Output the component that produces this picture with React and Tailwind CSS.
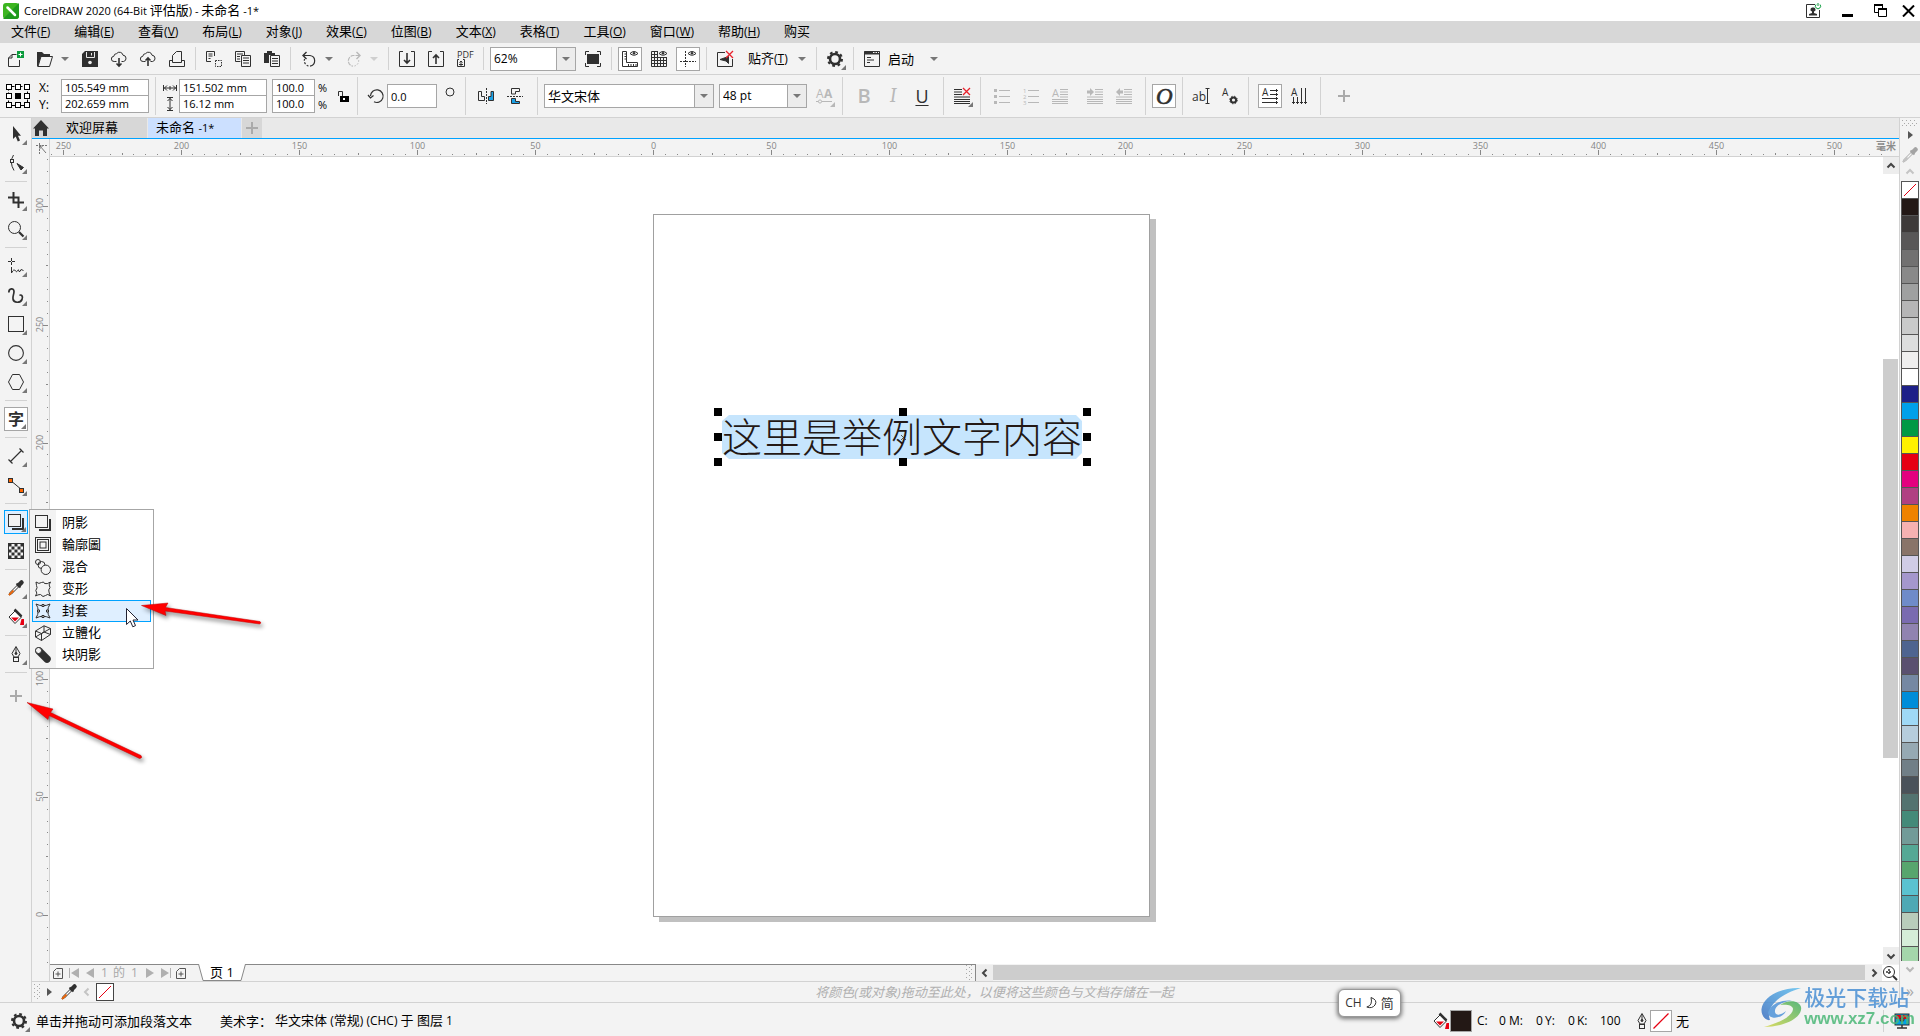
import React, { useState } from 'react';

const icons = {
  newDoc: (
    <>
      <path d="M8.5 3.5H4L.5 7V15.5H11.5V9" />
      <path d="M.5 7H4V3.5" />
      <rect x="9" y="0" width="7" height="7" fill="#0a9b3c" stroke="none" />
      <path d="M12.5 1.5V5.5M10.5 3.5H14.5" stroke="#fff" />
    </>
  ),
  open: (
    <>
      <path d="M0 1H5L7 3H13V6H4L1 15.5H0Z" fill="currentColor" stroke="none" />
      <path d="M1 15.5L4 5.5H15.5L12.5 15.5Z" fill="#f3f3f3" />
    </>
  ),
  save: (
    <>
      <path d="M3 0H16V16H0V3Z" fill="currentColor" stroke="none" />
      <path d="M4.5 1V6.5H12.5V1M9.5 2V4.5" stroke="#e8e8e8" />
      <circle cx="8" cy="11.5" r="1.8" fill="#f3f3f3" stroke="none" />
    </>
  ),
  cloudDown: (
    <>
      <path d="M5.5 10.5H3.2A2.6 2.6 0 0 1 2.8 5.3 A3 3 0 0 1 5.6 2.6 3.6 3.6 0 0 1 12 4.2 3.2 3.2 0 0 1 12.6 10.5H10.5" />
      <path d="M8 7V15M5.5 12.5L8 15L10.5 12.5" strokeWidth="1.6" />
    </>
  ),
  cloudUp: (
    <>
      <path d="M5.5 10.5H3.2A2.6 2.6 0 0 1 2.8 5.3 A3 3 0 0 1 5.6 2.6 3.6 3.6 0 0 1 12 4.2 3.2 3.2 0 0 1 12.6 10.5H10.5" />
      <path d="M8 15V7M5.5 9.5L8 7L10.5 9.5" strokeWidth="1.6" />
    </>
  ),
  print: (
    <>
      <path d="M3.5 9.5H.5V15.5H15.5V9.5H12.5" />
      <path d="M3.5 11.5V4.5L7.5 .5H12.5V11.5Z" />
    </>
  ),
  cut: (
    <>
      <path d="M8.5 5V.5H.5V10.5H5M2.5 3H6.5M2.5 5H6.5M2.5 7.5H4.5" />
      <path d="M9.5 9.5H15.5V15.5H9.5Z" strokeDasharray="1.5 1" />
    </>
  ),
  copy: (
    <>
      <path d="M5.5 10.5H.5V.5H9.5V4M2 3H8M2 5.5H5M2 8H5" />
      <path d="M6.5 4.5H15.5V15.5H6.5ZM8 7H14M8 9.5H14M8 12H14" />
    </>
  ),
  paste: (
    <>
      <path d="M0 2H3V0H8V2H11V4H5V12H0Z" fill="currentColor" stroke="none" />
      <path d="M6.5 4.5H15.5V15.5H6.5ZM8 7.5H14M8 10H14M8 12.5H14" />
    </>
  ),
  undo: (
    <>
      <path d="M2.5 4.5H9A5.4 5.4 0 0 1 9 15.2" strokeWidth="1.2" />
      <path d="M7.5 15A5.4 5.4 0 0 1 3.6 8" strokeDasharray="2 1.5" strokeWidth="1.2" />
      <path d="M5.5 1L2 4.5L5.5 8" strokeWidth="1.4" />
    </>
  ),
  redo: (
    <>
      <path d="M13.5 4.5H7A5.4 5.4 0 0 0 7 15.2" strokeWidth="1.2" strokeDasharray="4 1" />
      <path d="M8.5 15A5.4 5.4 0 0 0 12.4 8" strokeDasharray="1.5 1.5" />
      <path d="M10.5 1L14 4.5L10.5 8" strokeWidth="1.4" />
    </>
  ),
  importFile: (
    <>
      <path d="M4 .5H.5V15.5H15.5V.5H12" />
      <path d="M8 2V12M5 9L8 12L11 9" strokeWidth="1.6" />
    </>
  ),
  exportFile: (
    <>
      <path d="M4 .5H.5V15.5H15.5V.5H12" />
      <path d="M8 13V4M5 7L8 4L11 7" strokeWidth="1.6" />
    </>
  ),
  pdf: (
    <>
      <text x="0" y="7" fontSize="9" fill="currentColor" stroke="none" fontFamily="Open Sans, sans-serif">PDF</text>
      <path d="M2 8.5H.5V15.5H7.5V8.5H6M4 15V10M2.5 11.5L4 10L5.5 11.5M2 13.5H6" />
    </>
  ),
  fullScreen: (
    <>
      <rect x="2" y="3" width="12" height="10" fill="currentColor" stroke="none" />
      <path d="M.5 4V.5H4M12 .5H15.5V4M15.5 12V15.5H12M4 15.5H.5V12" />
    </>
  ),
  rulers: (
    <>
      <path d="M.5 .5H4.5V11.5H15.5V15.5H.5ZM2.5 3H4M2.5 5.5H4M2.5 8H4M6.5 13V15M9 13V15M11.5 13V15M14 13V15" />
      <path d="M8 2.5Q12 -1.5 16 2.5Q12 6 8 2.5Z" />
      <circle cx="12" cy="2.3" r="1.2" fill="currentColor" stroke="none" />
    </>
  ),
  grid: (
    <>
      <path d="M.5 .5H7M.5 .5V15.5H15.5V6M.5 3.5H7M.5 6.5H15.5M.5 9.5H15.5M.5 12.5H15.5M3.5 .5V15.5M6.5 .5V15.5M9.5 6V15.5M12.5 6V15.5" />
      <path d="M8 2.5Q12 -1.5 16 2.5Q12 6 8 2.5Z" />
      <circle cx="12" cy="2.3" r="1.2" fill="currentColor" stroke="none" />
    </>
  ),
  guides: (
    <>
      <path d="M5.5 0V16" strokeDasharray="2 1" />
      <path d="M0 10.5H16" strokeDasharray="2 1" />
      <path d="M8 2.5Q12 -1.5 16 2.5Q12 6 8 2.5Z" />
      <circle cx="12" cy="2.3" r="1.2" fill="currentColor" stroke="none" />
    </>
  ),
  snapOff: (
    <>
      <path d="M8 1.5H.5V15.5H15.5V8" />
      <path d="M3 8.5L11.5 5.5V12.5L9 10Z" fill="currentColor" />
      <path d="M9 0L16 7M16 0L9 7" stroke="#e8202a" strokeWidth="1.3" />
    </>
  ),
  gear: (
    <>
      <circle cx="8" cy="8" r="5" strokeWidth="2.6" />
      <circle cx="8" cy="8" r="7" strokeWidth="2" strokeDasharray="2.75 2.75" />
    </>
  ),
  launch: (
    <>
      <path d="M.5 .5H15.5V15.5H.5ZM3 6.5H7M3 9H10M3 11.5H6" />
      <path d="M0 2H16" strokeWidth="3" />
      <path d="M9 1.5H10.5M11.5 1.5H13M14 1.5H15" stroke="#f3f3f3" />
    </>
  ),
  width: <path d="M1.5 5V11M14.5 5V11M2 8H14M5 5.5L2.5 8L5 10.5M11 5.5L13.5 8L11 10.5M8 6V10" />,
  height: <path d="M5 1.5H11M5 14.5H11M8 2V14M5.5 5L8 2.5L10.5 5M5.5 11L8 13.5L10.5 11" />,
  lock: (
    <>
      <path d="M3.5 8V3.5H7.5V9" />
      <rect x="5" y="8" width="9" height="6" fill="#000" stroke="none" />
      <rect x="8" y="10" width="2" height="2" fill="#fff" stroke="none" />
    </>
  ),
  rotate: (
    <>
      <path d="M2.5 8A6.3 6.3 0 1 1 6 13.8" strokeWidth="1.2" />
      <path d="M0 7L2.5 10L5.5 7.5" strokeWidth="1.2" />
    </>
  ),
  mirrorH: (
    <>
      <path d="M8.5 0V16" strokeDasharray="2 1" />
      <path d="M.5 3.5H3.5V8.5H6.5V12.5H.5Z" />
      <path d="M15.5 3.5H13V8.5H10.5V12.5H15.5Z" fill="#1ba1e6" />
    </>
  ),
  mirrorV: (
    <>
      <path d="M0 8.5H16" strokeDasharray="2 1" />
      <path d="M4.5 6V.5H12.5V3.5H8.5V6Z" />
      <path d="M4.5 10.5V15.5H12.5V13.5H8.5V10.5Z" fill="#1ba1e6" />
    </>
  ),
  fontEffects: (
    <>
      <text x="0" y="10" fontSize="12" fill="currentColor" stroke="none" fontFamily="Open Sans, sans-serif">A</text>
      <text x="8" y="10" fontSize="12" fontWeight="700" fill="currentColor" stroke="none" fontFamily="Open Sans, sans-serif">A</text>
      <path d="M0 13.5H16" />
      <circle cx="4" cy="13.5" r="1.6" fill="#f3f3f3" />
    </>
  ),
  alignNone: (
    <>
      <path d="M0 1.5H8M0 4H8M0 6.5H8M0 9H16M0 11.5H16M0 13.5H16M0 15.5H16" />
      <path d="M9 0L16 7M16 0L9 7" stroke="#e8202a" strokeWidth="1.3" />
    </>
  ),
  bullets: (
    <>
      <path d="M5 2.5H16M5 8.5H16M5 14.5H16" />
      <path d="M0 2.5H3M0 8.5H3M0 14.5H3" strokeWidth="3" />
    </>
  ),
  numbers: (
    <>
      <path d="M5 2.5H16M5 8.5H16M5 14.5H16" />
      <text x="0" y="5" fontSize="6" fill="currentColor" stroke="none">1</text>
      <text x="0" y="11" fontSize="6" fill="currentColor" stroke="none">2</text>
      <text x="0" y="17" fontSize="6" fill="currentColor" stroke="none">3</text>
    </>
  ),
  dropCap: (
    <>
      <text x="0" y="9" fontSize="11" fill="currentColor" stroke="none" fontFamily="Open Sans, sans-serif">A</text>
      <path d="M8 1.5H16M8 4H16M8 6.5H16M8 9H16M0 11.5H16M0 13.5H16M0 15.5H16" />
    </>
  ),
  indent: (
    <>
      <path d="M0 2.5H3V0L7 4L3 8V5.5H0Z" fill="currentColor" stroke="none" />
      <path d="M8 1.5H16M8 4H16M8 6.5H16M0 9H16M0 11.5H16M0 13.5H16M0 15.5H16" />
    </>
  ),
  outdent: (
    <>
      <path d="M7 2.5H4V0L0 4L4 8V5.5H7Z" fill="currentColor" stroke="none" />
      <path d="M8 1.5H16M8 4H16M8 6.5H16M0 9H16M0 11.5H16M0 13.5H16M0 15.5H16" />
    </>
  ),
  openType: (
    <text x="0" y="16" fontSize="23" fontStyle="italic" fill="currentColor" stroke="currentColor" strokeWidth=".6" fontFamily="Liberation Serif, serif">O</text>
  ),
  editText: (
    <>
      <text x="-1" y="13" fontSize="12" fill="currentColor" stroke="none" fontFamily="Open Sans, sans-serif">ab</text>
      <path d="M12.5 .5H16.5M14.5 1V15M12.5 15.5H16.5" />
    </>
  ),
  textProps: (
    <>
      <text x="0" y="8" fontSize="10" fill="currentColor" stroke="none" fontFamily="Open Sans, sans-serif">A</text>
      <circle cx="11.5" cy="12" r="2.6" strokeWidth="2" />
      <circle cx="11.5" cy="12" r="3.8" strokeDasharray="1.5 1.5" />
    </>
  ),
  textHorizontal: (
    <>
      <text x="0" y="8" fontSize="10" fill="currentColor" stroke="none" fontFamily="Open Sans, sans-serif">A</text>
      <path d="M8 2.5H16M8 6.5H16M0 10.5H16M0 14.5H16M14.5 1V4M14.5 5V8M14.5 9V12M14.5 13V16" />
    </>
  ),
  textVertical: (
    <>
      <text x="0" y="8" fontSize="10" fill="currentColor" stroke="none" fontFamily="Open Sans, sans-serif">A</text>
      <path d="M2.5 9V16M6.5 9V16M10.5 0V16M14.5 0V16M1 14.5H4M5 14.5H8M9 14.5H12M13 14.5H16" />
    </>
  ),
  pick: <path d="M5 0V13L7.7 10.5L9.8 15.5L12 14.5L10 9.8H13Z" fill="currentColor" stroke="none" />,
  shape: (
    <>
      <path d="M5.5 0Q1 7 6 15.5" />
      <rect x="2.5" y="4.5" width="3" height="3" fill="#f3f3f3" />
      <path d="M9 8.5L15.5 12.5L13 15Z" fill="currentColor" />
    </>
  ),
  crop: <path d="M0 5.5H10.5V16M5.5 0V10.5H16" strokeWidth="2" />,
  zoom: (
    <>
      <circle cx="6.5" cy="6.5" r="6" />
      <path d="M11 11L15.5 15.5" strokeWidth="2.2" />
    </>
  ),
  freehand: (
    <>
      <path d="M3.5 0V7M0 3.5H7" strokeDasharray="3 1" />
      <path d="M3.5 9V15Q6 10 7.5 13Q8.5 15 9.5 12.5Q10.5 10.5 11 13.5Q12 14.5 13 11.5L15.5 12.5" />
    </>
  ),
  artistic: <path d="M.8 5.5C.8 1 6 .5 6 4.5C6 7.5 4.5 9 5 12C5.6 16 12 16.5 14 12.5C15.5 9 13 7 11.5 8.5" strokeWidth="1.7" />,
  rect: <rect x=".5" y=".5" width="15" height="15" />,
  ellipse: <circle cx="8" cy="8" r="7.4" strokeWidth="1.1" />,
  polygon: <path d="M4.5 .5H11.5L15.5 8L11.5 15.5H4.5L.5 8Z" />,
  text: (
    <text x="0" y="14" fontSize="16" fontWeight="700" fill="currentColor" stroke="none" fontFamily="Noto Sans CJK SC, sans-serif">字</text>
  ),
  line: <path d="M2 14L14 2M.5 11.5L4.5 15.5M11.5 .5L15.5 4.5" strokeWidth="1.2" />,
  connector: (
    <>
      <path d="M2 3L14 13" />
      <rect x=".5" y="1.5" width="4" height="4" fill="#f60" />
      <rect x="11.5" y="11.5" width="4" height="4" fill="#f60" />
    </>
  ),
  shadow: (
    <>
      <path d="M15 4V15H4" strokeWidth="2" />
      <rect x=".5" y=".5" width="12" height="12" fill="#f3f3f3" />
    </>
  ),
  checker: (
    <>
      <rect x=".5" y=".5" width="15" height="15" />
      {[0, 1, 2, 3, 4].map((row) =>
        [0, 1, 2, 3, 4].map((col) =>
          (row + col) % 2 ? null : (
            <rect key={`${row}-${col}`} x={col * 3 + 0.5} y={row * 3 + 0.5} width="3" height="3" fill="currentColor" stroke="none" />
          )
        )
      )}
    </>
  ),
  eyedropper: (
    <>
      <path d="M9.5 5L2 12.5L1 15L3.5 14L11 6.5" fill="#fff" />
      <path d="M1 15L5.5 10.5" stroke="#e8650a" strokeWidth="2" />
      <path d="M8.5 3.5L12.5 7.5" strokeWidth="1.8" />
      <path d="M11 5L13.5 2.5" strokeWidth="4.5" strokeLinecap="round" />
    </>
  ),
  fill: (
    <>
      <path d="M7.5 1.5L13.5 8L7 14.5L1 8Z" fill="#fff" />
      <path d="M6.5 .5L13.5 7.5" strokeWidth="2.5" />
      <path d="M3 8.5H11L7 12.5Z" fill="#e60012" stroke="none" />
      <path d="M13.5 10H16V16H12Z" fill="#e60012" stroke="none" />
    </>
  ),
  pen: (
    <>
      <path d="M8 .5L12 7.5L10 11H6L4 7.5Z" />
      <path d="M8 1V7" />
      <circle cx="8" cy="7.5" r="1" fill="currentColor" />
      <rect x="5.5" y="11.5" width="5" height="4" />
    </>
  ),
  contour: (
    <>
      <rect x=".5" y=".5" width="15" height="15" />
      <rect x="2.5" y="2.5" width="11" height="11" />
      <rect x="5" y="5" width="6" height="6" />
    </>
  ),
  blend: (
    <>
      <circle cx="3" cy="3" r="2.5" />
      <circle cx="6.5" cy="6" r="3.5" />
      <circle cx="10.8" cy="10.8" r="4.7" fill="#f3f3f3" />
    </>
  ),
  distort: <path d="M1 1Q4 3.5 6.5 1.5Q9 0 9.5 2.5Q12 3.5 15.5 1Q13 4 15 6.5Q13 9 14 11Q14.5 13.500 15.5 15Q12.5 12 10.500 14.500Q8 17 5.5 13.5Q3 13.500 .5 15Q3 12 .8 9.5Q3 6.5 1.5 4.5Z" />,
  envelope: (
    <>
      <path d="M1 1Q8 4.5 15 1Q10.5 8 15 15Q8 11.5 1 15Q5.5 8 1 1Z" />
      <path d="M7 1.5H9V3.5H7ZM7 12.5H9V14.5H7ZM2.5 7H4.5V9H2.5ZM11.5 7H13.5V9H11.5Z" fill="#f3f3f3" />
    </>
  ),
  extrude: <path d="M.5 6L9 .8L15.5 3.5V9.5L6.5 15.5L.5 12ZM.5 6L6.5 8.5L15.5 3.5M6.5 8.5V15.5M9 .8V7M9 7L.5 12M9 7L15.5 9.5" />,
  blockShadow: (
    <>
      <path d="M4 4L12 12" strokeWidth="7.5" strokeLinecap="round" />
      <circle cx="3.5" cy="3.5" r="3" fill="#f3f3f3" />
    </>
  ),
  addPage: <path d="M6.5 3.5H12.5V13.5H3.5V6.5L6.5 3.5M8 6.5V11.5M5.5 9H10.5" />,
  magnifier: (
    <>
      <circle cx="7" cy="7" r="5.5" />
      <path d="M11 11L15 15" strokeWidth="2" />
      <path d="M7 4V10M4 7H10" strokeDasharray="2 1" strokeWidth="1.5" />
    </>
  )
};

const Icon = ({ name, className = 'text-[#303030]' }) => (
  <svg width="16" height="16" viewBox="0 0 16 16" fill="none" stroke="currentColor" className={`shrink-0 overflow-visible ${className}`} aria-hidden="true">
    {icons[name]}
  </svg>
);

const Corner = ({ className = 'fill-[#777]' }) => (
  <svg width="5" height="5" viewBox="0 0 5 5" className={`absolute right-px bottom-px ${className}`} aria-hidden="true">
    <path d="M5 0V5H0Z" />
  </svg>
);

const Caret = ({ className = 'fill-[#777]' }) => (
  <svg width="8" height="4" viewBox="0 0 8 4" className={className} aria-hidden="true">
    <path d="M0 0H8L4 4Z" />
  </svg>
);

const Chevron = ({ dir, className = 'stroke-[#444]' }) => {
  const paths = {
    up: 'M1.5 6.5L5 3L8.5 6.5',
    down: 'M1.5 3.5L5 7L8.5 3.5',
    left: 'M6.5 1.5L3 5L6.5 8.5',
    right: 'M3.5 1.5L7 5L3.5 8.5'
  };
  return (
    <svg width="10" height="10" viewBox="0 0 10 10" fill="none" strokeWidth="2" className={className} aria-hidden="true">
      <path d={paths[dir]} />
    </svg>
  );
};

const PlusMark = () => (
  <svg width="12" height="12" viewBox="0 0 12 12" stroke="#aaa" strokeWidth="2" aria-hidden="true">
    <path d="M6 0V12M0 6H12" />
  </svg>
);

const ToolButton = ({ name, label, active, corner, muted }) => (
  <button
    type="button"
    aria-label={label}
    className={`relative flex h-6 w-6 shrink-0 items-center justify-center ${active ? 'border border-[#a6a6a6] bg-white' : ''}`}
  >
    <Icon name={name} className={muted ? 'text-[#b8b8b8]' : 'text-[#303030]'} />
    {corner && <Corner className={muted ? 'fill-[#b8b8b8]' : 'fill-[#777]'} />}
  </button>
);

const DropButton = ({ name, label, muted }) => (
  <div className="flex">
    <ToolButton name={name} label={label} muted={muted} />
    <button type="button" aria-label={`${label}列表`} className="flex w-4 items-center justify-center">
      <Caret className={muted ? 'fill-[#cfcfcf]' : 'fill-[#777]'} />
    </button>
  </div>
);

const Divider = () => <div className="mx-px w-px shrink-0 self-stretch bg-[#d2d2d2]" />;

const Combo = ({ label, options, className }) => (
  <div className={`flex h-6 shrink-0 border border-[#a6a6a6] bg-white ${className}`}>
    <select aria-label={label} className="min-w-0 flex-1 appearance-none bg-white pl-[3px] outline-none">
      {options.map((option) => (
        <option key={option}>{option}</option>
      ))}
    </select>
    <span className="flex w-[19px] items-center justify-center border-l border-[#a6a6a6] bg-[#ececec]">
      <Caret />
    </span>
  </div>
);

const FieldPair = ({ first, second, className }) => (
  <div className={`flex shrink-0 flex-col divide-y divide-[#a6a6a6] border border-[#a6a6a6] bg-white text-[11px] ${className}`}>
    <input aria-label={first.label} defaultValue={first.value} className="h-4 w-full bg-transparent pl-[3px] outline-none" />
    <input aria-label={second.label} defaultValue={second.value} className="h-4 w-full bg-transparent pl-[3px] outline-none" />
  </div>
);

const NoColor = ({ className }) => (
  <svg viewBox="0 0 16 16" preserveAspectRatio="none" className={className} aria-hidden="true">
    <rect width="16" height="16" fill="#fff" />
    <path d="M2 14L14 2" stroke="#e60012" />
  </svg>
);

const Grip = ({ vertical }) => (
  <svg width={vertical ? 6 : 16} height={vertical ? 16 : 6} className="shrink-0 fill-[#a8a8a8]" aria-hidden="true">
    {[0, 1, 2, 3, 4, 5, 6, 7].map((i) =>
      vertical ? (
        <rect key={i} x={i % 2 ? 3 : 0} y={i * 2} width="1" height="1" />
      ) : (
        <rect key={i} x={i * 2} y={i % 2 ? 3 : 0} width="1" height="1" />
      )
    )}
    {[0, 1, 2, 3].map((i) =>
      vertical ? <rect key={i} x="5" y={i * 4} width="1" height="1" /> : <rect key={i} x={i * 4} y="5" width="1" height="1" />
    )}
  </svg>
);

const menus = [
  ['文件', 'F'],
  ['编辑', 'E'],
  ['查看', 'V'],
  ['布局', 'L'],
  ['对象', 'J'],
  ['效果', 'C'],
  ['位图', 'B'],
  ['文本', 'X'],
  ['表格', 'T'],
  ['工具', 'O'],
  ['窗口', 'W'],
  ['帮助', 'H'],
  ['购买', null]
];

const effects = [
  { name: 'shadow', label: '阴影' },
  { name: 'contour', label: '輪廓圖' },
  { name: 'blend', label: '混合' },
  { name: 'distort', label: '变形' },
  { name: 'envelope', label: '封套' },
  { name: 'extrude', label: '立體化' },
  { name: 'blockShadow', label: '块阴影' }
];

const swatches = [
  '#231815', '#3e3a39', '#595757', '#727171', '#898989', '#9fa0a0', '#b5b5b6', '#c9caca',
  '#dcdddd', '#efefef', '#ffffff', '#1d2088', '#00a0e9', '#009944', '#fff100', '#e60012',
  '#e4007f', '#b04082', '#ef8200', '#f5b1b1', '#897469', '#d0cce6', '#a597cc', '#6f8bc9',
  '#7a6bb0', '#9083b0', '#4e6490', '#5a5070', '#7588a3', '#008dd9', '#9fd9f6', '#b6cddc',
  '#96a9b3', '#717f87', '#4a525a', '#537370', '#448a79', '#729b98', '#54a895', '#57a56d',
  '#5bc2d0', '#4fa9b5', '#b9ccbb', '#d5ecd8', '#a4d6ab'
];

// 50 mm on the rulers is 118.1 px at 62% zoom
const MM50 = 118.1;

const rulerTicks = (zero, from, to, dir) => {
  const ticks = [];
  for (let i = from; i <= to; i += 1) {
    ticks.push({ i, pos: Math.round(zero + (dir * i * MM50) / 10) + 0.5 });
  }
  return ticks;
};

const tickSize = (i) => {
  if (i % 10 === 0) return 5;
  return i % 5 === 0 ? 2 : 1;
};

const TopRuler = () => (
  <div className="relative h-[18px] overflow-hidden border-b border-[#d2d2d2]">
    <svg width="100%" height="17" aria-hidden="true">
      {rulerTicks(603, -51, 104, 1).map(({ i, pos }) => (
        <g key={i}>
          <path d={`M${pos} ${16 - tickSize(i)}V16`} stroke="#888" />
          {i % 10 === 0 && (
            <text x={pos} y="10" fontSize="9" textAnchor="middle" fill="#858585">
              {Math.abs(i * 5)}
            </text>
          )}
        </g>
      ))}
    </svg>
    <span className="absolute top-0 right-[3px] text-[10px] leading-[14px] font-bold text-[#8c8c8c]">毫米</span>
  </div>
);

const SideRuler = () => (
  <svg width="17" height="100%" className="min-h-0 flex-1" aria-hidden="true">
    {rulerTicks(758, -4, 64, -1).map(({ i, pos }) => (
      <g key={i}>
        <path d={`M${16 - tickSize(i)} ${pos}H16`} stroke="#888" />
        {i % 10 === 0 && (
          <text transform={`translate(11 ${pos - 1}) rotate(-90)`} fontSize="9" textAnchor="middle" fill="#858585">
            {Math.abs(i * 5)}
          </text>
        )}
      </g>
    ))}
  </svg>
);

const TitleBar = () => (
  <header className="flex h-[21px] shrink-0 items-center bg-white pr-[5px] pl-[3px]">
    <svg width="16" height="16" viewBox="0 0 16 16" aria-hidden="true">
      <rect width="16" height="16" rx="3" fill="#3cb520" />
      <path d="M0 16L16 0V13A3 3 0 0 1 13 16Z" fill="#1f9a1c" />
      <path d="M4.5 4.5L12 12" stroke="#fff" strokeWidth="2.5" strokeLinecap="round" />
    </svg>
    <h1 className="ml-[5px] text-[11px]">
      CorelDRAW 2020 (64-Bit <span className="text-[13px]">评估版</span>) - <span className="text-[13px]">未命名</span> -1*
    </h1>
    <div className="ml-auto flex items-center">
      <button type="button" aria-label="帐户" className="mr-5">
        <svg width="16" height="16" viewBox="0 0 16 16" fill="none" stroke="#303030" aria-hidden="true">
          <path d="M9 1.5H.5V14.5H13.5V7" />
          <path d="M7 4.5a2 2 0 0 1 1 4v1.5l3 1v1.5H3v-1.5l3-1V8.5a2 2 0 0 1 1-4Z" fill="#303030" stroke="none" />
          <path d="M10 1.5a2.6 2.6 0 1 0 4 0M12 0V3" stroke="#0a9b3c" />
        </svg>
      </button>
      <button type="button" aria-label="最小化" className="mr-5 flex h-4 w-3 items-end pb-[2px]">
        <span className="h-[3px] w-[11px] bg-black" />
      </button>
      <button type="button" aria-label="还原" className="mr-[14px]">
        <svg width="14" height="14" viewBox="0 0 14 14" fill="none" stroke="#000" aria-hidden="true">
          <path d="M.5 1.5H8.5V8.5H.5Z" />
          <path d="M0 1H9" strokeWidth="2" />
          <path d="M4.5 5.5H12.5V12.5H4.5Z" fill="#fff" />
          <path d="M4 5H13" strokeWidth="2" />
        </svg>
      </button>
      <button type="button" aria-label="关闭">
        <svg width="13" height="12" viewBox="0 0 13 12" stroke="#000" strokeWidth="2" aria-hidden="true">
          <path d="M1 .5L12 11.5M12 .5L1 11.5" />
        </svg>
      </button>
    </div>
  </header>
);

const MenuBar = () => (
  <nav className="flex h-[22px] shrink-0 items-center gap-6 bg-[#d7d7d7] pb-[2px] pl-[11px]">
    {menus.map(([title, key]) => (
      <button key={title} type="button" className="text-[12px] whitespace-nowrap">
        <span className="text-[13px]">{title}</span>
        {key && (
          <>
            (<span className="underline">{key}</span>)
          </>
        )}
      </button>
    ))}
  </nav>
);

const StandardBar = () => (
  <div className="flex h-8 shrink-0 items-center gap-[5px] border-b border-[#d2d2d2] py-1 pl-1">
    <ToolButton name="newDoc" label="新建" />
    <DropButton name="open" label="打开" />
    <ToolButton name="save" label="保存" />
    <ToolButton name="cloudDown" label="从云打开" />
    <ToolButton name="cloudUp" label="保存到云" />
    <ToolButton name="print" label="打印" />
    <Divider />
    <ToolButton name="cut" label="剪切" />
    <ToolButton name="copy" label="复制" />
    <ToolButton name="paste" label="粘贴" />
    <Divider />
    <DropButton name="undo" label="撤消" />
    <DropButton name="redo" label="重做" muted />
    <Divider />
    <ToolButton name="importFile" label="导入" />
    <ToolButton name="exportFile" label="导出" />
    <ToolButton name="pdf" label="发布为 PDF" />
    <Divider />
    <Combo label="缩放级别" options={['62%', '100%', '200%']} className="w-[86px]" />
    <ToolButton name="fullScreen" label="全屏预览" />
    <Divider />
    <ToolButton name="rulers" label="显示标尺" active />
    <ToolButton name="grid" label="显示网格" />
    <ToolButton name="guides" label="显示辅助线" active />
    <Divider />
    <ToolButton name="snapOff" label="关闭贴齐" />
    <button type="button" className="flex w-[68px] shrink-0 items-center justify-between pr-1 pl-[6px] whitespace-nowrap">
      <span>
        <span className="text-[13px]">贴齐</span>(<span className="underline">T</span>)
      </span>
      <Caret />
    </button>
    <Divider />
    <ToolButton name="gear" label="选项" corner />
    <Divider />
    <button type="button" className="flex items-center pl-1 whitespace-nowrap">
      <Icon name="launch" />
      <span className="mr-4 ml-2 text-[13px]">启动</span>
      <Caret />
    </button>
  </div>
);

const PropertyBar = () => (
  <div className="flex h-[43px] shrink-0 items-center gap-[5px] border-b border-[#d2d2d2] py-[2px] pl-[6px]">
    <svg width="24" height="24" viewBox="0 0 24 24" fill="#fff" stroke="#000" className="shrink-0" aria-hidden="true">
      <path d="M2.5 2.5H21.5V21.5H2.5Z" fill="none" strokeDasharray="6 2" />
      {[0, 1, 2].map((row) =>
        [0, 1, 2].map((col) => (
          <rect key={`${row}-${col}`} x={col * 9 + 0.5} y={row * 9 + 0.5} width="5" height="5" fill={row === 1 && col === 1 ? '#000' : '#fff'} />
        ))
      )}
    </svg>
    <div className="flex w-[21px] shrink-0 flex-col pl-1 text-[12px] leading-[17px]">
      <span>X:</span>
      <span>Y:</span>
    </div>
    <FieldPair first={{ label: 'X', value: '105.549 mm' }} second={{ label: 'Y', value: '202.659 mm' }} className="w-[88px]" />
    <Divider />
    <div className="flex shrink-0 items-center gap-px">
      <div className="flex w-4 flex-col items-center">
        <Icon name="width" />
        <Icon name="height" />
      </div>
      <FieldPair first={{ label: '宽度', value: '151.502 mm' }} second={{ label: '高度', value: '16.12 mm' }} className="w-[88px]" />
    </div>
    <div className="flex shrink-0 gap-[3px]">
      <FieldPair first={{ label: '水平缩放', value: '100.0' }} second={{ label: '垂直缩放', value: '100.0' }} className="w-[43px]" />
      <div className="flex w-3 flex-col text-[11px] leading-[17px]">
        <span>%</span>
        <span>%</span>
      </div>
    </div>
    <button type="button" aria-label="锁定比率" className="flex h-6 w-4 shrink-0 items-center">
      <Icon name="lock" />
    </button>
    <Divider />
    <div className="flex shrink-0 items-center pl-1">
      <Icon name="rotate" />
      <input aria-label="旋转角度" defaultValue="0.0" className="ml-[3px] h-6 w-[50px] border border-[#a6a6a6] bg-white pl-[3px] text-[11px] outline-none" />
      <svg width="10" height="10" viewBox="0 0 10 10" fill="none" stroke="#303030" className="mr-1 mb-2 ml-2" aria-hidden="true">
        <circle cx="5" cy="5" r="4" />
      </svg>
    </div>
    <Divider />
    <div className="flex shrink-0 gap-[5px] pr-1 pl-[2px]">
      <ToolButton name="mirrorH" label="水平镜像" />
      <ToolButton name="mirrorV" label="垂直镜像" />
    </div>
    <Divider />
    <Combo label="字体" options={['华文宋体']} className="w-[170px] text-[13px]" />
    <Combo label="字号" options={['48 pt', '72 pt']} className="w-[88px]" />
    <ToolButton name="fontEffects" label="变量字体" muted corner />
    <Divider />
    <div className="flex shrink-0 gap-[5px] px-[3px] text-[20px] leading-6">
      <button type="button" className="w-6 font-semibold text-[#b8b8b8]">B</button>
      <button type="button" className="w-6 font-serif text-[#b8b8b8] italic">I</button>
      <button type="button" className="w-6 text-[18px] text-[#303030] underline underline-offset-2">U</button>
    </div>
    <Divider />
    <ToolButton name="alignNone" label="文本对齐" corner />
    <Divider />
    <div className="flex shrink-0 gap-[5px] px-[3px]">
      <ToolButton name="bullets" label="项目符号列表" muted />
      <ToolButton name="numbers" label="编号列表" muted />
      <ToolButton name="dropCap" label="首字下沉" muted />
      <span className="w-px" />
      <ToolButton name="indent" label="增加缩进量" muted />
      <ToolButton name="outdent" label="减少缩进量" muted />
    </div>
    <Divider />
    <ToolButton name="openType" label="交互式 OpenType" active />
    <Divider />
    <ToolButton name="editText" label="编辑文本" />
    <ToolButton name="textProps" label="文本属性" />
    <Divider />
    <div className="flex shrink-0 gap-[5px] px-[3px]">
      <ToolButton name="textHorizontal" label="水平方向文本" active />
      <ToolButton name="textVertical" label="垂直方向文本" />
    </div>
    <Divider />
    <button type="button" aria-label="快速自定义" className="ml-[11px]">
      <PlusMark />
    </button>
  </div>
);

const ToolDivider = () => <div className="my-px ml-px h-px w-[22px] shrink-0 bg-[#d2d2d2]" />;

const Toolbox = () => {
  const [effect, setEffect] = useState('envelope');

  return (
    <aside className="flex w-8 shrink-0 flex-col gap-[5px] border-r border-[#d2d2d2] pt-1 pl-1">
      <ToolButton name="pick" label="选择" corner />
      <ToolButton name="shape" label="形状" corner />
      <ToolDivider />
      <ToolButton name="crop" label="裁剪" corner />
      <ToolButton name="zoom" label="缩放" corner />
      <ToolDivider />
      <ToolButton name="freehand" label="手绘" corner />
      <ToolButton name="artistic" label="艺术笔" corner />
      <ToolButton name="rect" label="矩形" corner />
      <ToolButton name="ellipse" label="椭圆形" corner />
      <ToolButton name="polygon" label="多边形" corner />
      <ToolDivider />
      <ToolButton name="text" label="文本" active corner />
      <ToolDivider />
      <ToolButton name="line" label="平行度量" corner />
      <ToolButton name="connector" label="连接器" corner />
      <ToolDivider />
      <div className="relative h-6 w-6 shrink-0">
        <button type="button" aria-label="阴影工具" className="relative flex h-6 w-6 items-center justify-center border border-[#00a2ff] bg-[#dfefff]">
          <Icon name="shadow" />
          <Corner />
        </button>
        {/* Effects flyout */}
        <ul className="absolute -top-px left-[25px] z-10 w-[125px] border border-[#a6a6a6] bg-linear-to-r from-[#f3f3f3] from-[26px] to-white to-[26px] p-[2px]">
          {effects.map(({ name, label }) => (
            <li key={name}>
              <button
                type="button"
                onClick={() => setEffect(name)}
                className={`flex h-[22px] w-full items-center gap-[11px] border pl-[2px] text-[13px] ${
                  effect === name ? 'border-[#00a2ff] bg-[#dfefff]' : 'border-transparent'
                }`}
              >
                <Icon name={name} />
                <span className="pb-[2px]">{label}</span>
              </button>
            </li>
          ))}
        </ul>
      </div>
      <ToolButton name="checker" label="透明度" />
      <ToolDivider />
      <ToolButton name="eyedropper" label="颜色滴管" corner />
      <ToolButton name="fill" label="交互式填充" corner />
      <ToolDivider />
      <ToolButton name="pen" label="轮廓笔" corner />
      <ToolDivider />
      <button type="button" aria-label="自定义工具箱" className="mt-[5px] flex h-6 w-6 items-center justify-center">
        <PlusMark />
      </button>
    </aside>
  );
};

const DocumentTabs = () => (
  <div className="flex h-[21px] shrink-0 border-b border-[#00a2ff] bg-[#e9e9e9] text-[13px]">
    <button type="button" className="flex w-[115px] items-center gap-[17px] bg-[#d7d7d7] pl-px">
      <svg width="16" height="16" viewBox="0 0 16 16" fill="#303030" aria-hidden="true">
        <path d="M8 0L16 8.5H14V16H10V10.5H6V16H2V8.5H0Z" />
      </svg>
      <span className="pb-[2px]">欢迎屏幕</span>
    </button>
    <button type="button" className="w-[95px] border-x border-[#e9e9e9] bg-[#cce0ff] pb-[2px] pl-2 text-left">
      未命名 <span className="text-[11px]">-1*</span>
    </button>
    <button type="button" aria-label="新建文档" className="flex w-5 items-center justify-center bg-[#d7d7d7]">
      <PlusMark />
    </button>
  </div>
);

const Canvas = () => (
  <div className="relative min-w-0 flex-1 overflow-hidden bg-white">
    <div className="absolute top-[57px] left-[603px] h-[703px] w-[497px] border border-[#a0a0a0] bg-white shadow-[6px_5px_0_0_#c0c0c0]" />
    <div className="absolute top-[251px] left-[664px] h-[58px] w-[377px]">
      <svg width="377" height="58" className="absolute inset-0" aria-hidden="true">
        <path d="M15 7H362L368 13V45L362 51H15L8 45V13Z" fill="#c6e5fd" />
        {[0, 185, 369].map((x) =>
          [0, 25, 50].map((y) =>
            x === 185 && y === 25 ? null : <rect key={`${x}-${y}`} x={x} y={y} width="8" height="8" />
          )
        )}
        <path d="M187 27L192 32M192 27L187 32" stroke="#555" />
      </svg>
      <p className="absolute top-1 left-2 font-['Noto_Sans_CJK_SC',sans-serif] text-[40px] leading-[46px] font-light whitespace-nowrap text-[#231815]">
        这里是举例文字内容
      </p>
    </div>
  </div>
);

const VerticalScroll = () => (
  <div className="flex w-4 shrink-0 flex-col bg-white">
    <button type="button" aria-label="向上滚动" className="flex h-[17px] items-center justify-center bg-[#ededed]">
      <Chevron dir="up" />
    </button>
    <div className="flex-[185]" />
    <div className="mr-px flex-[399] bg-[#cdcdcd]" />
    <div className="flex-[189]" />
    <button type="button" aria-label="向下滚动" className="flex h-[17px] items-center justify-center bg-[#ededed]">
      <Chevron dir="down" />
    </button>
  </div>
);

const NavArrow = ({ d, label }) => (
  <button type="button" aria-label={label} className="w-[10px]">
    <svg width="10" height="10" viewBox="0 0 10 10" fill="#b0b0b0" aria-hidden="true">
      <path d={d} />
    </svg>
  </button>
);

const PageNavigator = () => (
  <div className="flex h-[17px] shrink-0">
    <div className="flex w-[926px] shrink-0 items-center border-t border-r border-[#888] pr-[3px] text-[12px] text-[#a8a8a8]">
      <button type="button" aria-label="在前面添加页">
        <Icon name="addPage" className="text-[#555]" />
      </button>
      <div className="flex items-center gap-[6px] pr-[2px] pl-[3px]">
        <NavArrow label="首页" d="M0 0H1V10H0ZM10 0V10L2 5Z" />
        <NavArrow label="上一页" d="M9 0V10L1 5Z" />
        <span className="w-[6px]">1</span>
        <span className="w-3">的</span>
        <span className="mr-[2px] w-[6px]">1</span>
        <NavArrow label="下一页" d="M1 0V10L9 5Z" />
        <NavArrow label="末页" d="M9 0H10V10H9ZM0 0V10L8 5Z" />
      </div>
      <button type="button" aria-label="在后面添加页">
        <Icon name="addPage" className="text-[#555]" />
      </button>
      <button type="button" className="relative -mt-px ml-[9px] h-[17px] w-[48px] text-[13px] leading-[15px] text-black">
        <svg width="48" height="17" viewBox="0 0 48 17" className="absolute inset-0" aria-hidden="true">
          <path d="M.5 0L5 16.5H43L47.5 0" fill="#fff" stroke="#888" />
        </svg>
        <span className="relative">页 1</span>
      </button>
      <span className="ml-auto">
        <Grip vertical />
      </span>
    </div>
    <div className="flex min-w-0 flex-1 pt-px">
      <button type="button" aria-label="向左滚动" className="flex w-[17px] items-center justify-center bg-[#ededed]">
        <Chevron dir="left" />
      </button>
      <div className="mb-px flex-1 bg-[#cdcdcd]" />
      <button type="button" aria-label="向右滚动" className="flex w-[17px] items-center justify-center bg-[#ededed]">
        <Chevron dir="right" />
      </button>
      <button type="button" aria-label="导航器" className="w-[17px] bg-white">
        <Icon name="magnifier" />
      </button>
    </div>
  </div>
);

const DocumentPalette = () => (
  <div className="flex h-[21px] shrink-0 items-center border-t border-[#d2d2d2] pl-[2px]">
    <Grip vertical />
    <svg width="5" height="8" viewBox="0 0 5 8" fill="#555" className="mr-[9px] ml-[7px]" aria-hidden="true">
      <path d="M0 0L5 4L0 8Z" />
    </svg>
    <Icon name="eyedropper" />
    <Chevron dir="left" className="mr-1 ml-[5px] stroke-[#c4c4c4]" />
    <NoColor className="h-[18px] w-[18px] border border-[#444]" />
    <p className="flex-1 pr-6 text-center text-[13px] text-[#b0b0b0] italic">将颜色(或对象)拖动至此处，以便将这些颜色与文档存储在一起</p>
  </div>
);

const ColorPalette = () => (
  <aside className="flex w-[21px] shrink-0 flex-col items-center overflow-hidden border-l border-[#d2d2d2] pt-[2px]">
    <Grip />
    <svg width="5" height="8" viewBox="0 0 5 8" fill="#555" className="mt-[5px] mb-2 shrink-0" aria-hidden="true">
      <path d="M0 0L5 4L0 8Z" />
    </svg>
    <span className="flex opacity-40 grayscale">
      <Icon name="eyedropper" />
    </span>
    <Chevron dir="up" className="my-1 shrink-0 stroke-[#c4c4c4]" />
    <div className="min-h-0 w-[18px] flex-1 overflow-hidden border-t border-[#555]">
      <button type="button" aria-label="无填充" className="flex h-[17px] w-full border-x border-b border-[#555]">
        <NoColor className="h-4 w-4" />
      </button>
      {swatches.map((color) => (
        <button
          key={color}
          type="button"
          aria-label={color}
          className="block h-[17px] w-full border-x border-b border-[#555]"
          style={{ backgroundColor: color }}
        />
      ))}
    </div>
    <Chevron dir="down" className="mt-[3px] mb-[10px] shrink-0 stroke-[#b8b8b8]" />
    <span className="mb-1 text-[16px] leading-[14px] text-[#a8a8a8]">»</span>
  </aside>
);

const StatusBar = () => (
  <footer className="flex h-[34px] shrink-0 items-center border-t border-[#d2d2d2] pt-[2px] pl-[7px] text-[12px]">
    <ToolButton name="gear" label="状态栏选项" corner />
    <span className="ml-[5px] text-[13px]">单击并拖动可添加段落文本</span>
    <span className="ml-7 text-[13px]">美术字：</span>
    <span className="ml-[3px]">
      <span className="text-[13px]">华文宋体</span> (<span className="text-[13px]">常规</span>) (CHC) <span className="text-[13px]">于 图层</span> 1
    </span>
    <div className="ml-auto flex w-[487px] items-center">
      <Icon name="fill" />
      <span className="ml-px h-[22px] w-[22px] border border-[#a6a6a6] bg-[#231815]" />
      <span className="ml-[5px] w-[22px]">C:</span>
      <span className="w-[10px]">0</span>
      <span className="w-[27px]">M:</span>
      <span className="w-[9px]">0</span>
      <span className="w-[23px]">Y:</span>
      <span className="w-[9px]">0</span>
      <span className="w-[23px]">K:</span>
      <span className="w-[34px]">100</span>
      <Icon name="pen" />
      <NoColor className="h-[22px] w-[22px] border border-[#a6a6a6]" />
      <span className="ml-1 text-[13px]">无</span>
      <div className="ml-auto flex items-center gap-[10px] pr-[10px]">
        <span className="h-[22px] w-px bg-[#d2d2d2]" />
        <svg width="16" height="16" viewBox="0 0 16 16" aria-hidden="true">
          <rect x="1" y="1" width="14" height="11" fill="#00a0e9" stroke="#303030" />
          <rect x="2" y="2" width="12" height="4" fill="#e60012" />
          <circle cx="8" cy="6.5" r="2" fill="#e60012" stroke="#303030" />
          <path d="M3 15H13M8 12V15" stroke="#303030" strokeWidth="1.5" />
        </svg>
      </div>
    </div>
  </footer>
);

const ImeBadge = () => (
  <div className="absolute right-[519px] bottom-[19px] flex h-7 w-[63px] items-center justify-center gap-1 rounded-md border border-[#999] bg-white text-[12px] text-[#333] shadow-[0_1px_4px_1px_#777]">
    CH
    <svg width="11" height="12" viewBox="0 0 11 12" fill="none" stroke="#333" aria-hidden="true">
      <path d="M5 .5Q12 3 9 8Q6 12 .8 10Q7 8.5 5 .5Z" />
    </svg>
    <span className="text-[13px]">简</span>
  </div>
);

const SiteMark = () => (
  <div className="pointer-events-none absolute right-[5px] bottom-2 flex items-center opacity-85">
    <svg width="43" height="41" viewBox="0 0 43 41" aria-hidden="true">
      <defs>
        <linearGradient id="swirlBlue" x1="0" y1="1" x2="1" y2="0">
          <stop offset="0" stopColor="#3b6fc0" />
          <stop offset="1" stopColor="#5fc0f0" />
        </linearGradient>
        <linearGradient id="swirlGreen" x1="0" y1="1" x2="1" y2="0">
          <stop offset="0" stopColor="#d8d84a" />
          <stop offset="1" stopColor="#3fae68" />
        </linearGradient>
      </defs>
      <path d="M40 1C20 0 2 10 .5 22C0 29 5 34 9 33C5 22 14 9 40 1Z" fill="url(#swirlBlue)" />
      <path d="M7 26C9 17 22 12 31 14C22 14 13 19 14 25C15 30 22 27 25 24C22 31 9 34 7 26Z" fill="#4f93d8" />
      <path d="M19 18C28 11 42 14 40 23C38 33 20 40 3 40C18 36 32 29 32 22C32 18 25 17 19 18Z" fill="url(#swirlGreen)" />
    </svg>
    <div className="flex flex-col font-['Liberation_Sans','Noto_Sans_CJK_SC',sans-serif]">
      <span className="text-[21px] leading-[23px] font-medium text-[#4a90d4]">极光下载站</span>
      <span className="text-[17px] leading-[19px] font-bold text-[#4cb878]">www.xz7.com</span>
    </div>
  </div>
);

// Red pointer arrows and the mouse pointer over the flyout
const Pointers = () => (
  <svg width="300" height="180" viewBox="0 590 300 180" className="pointer-events-none absolute top-[590px] left-0 z-20" aria-hidden="true">
    <g style={{ filter: 'drop-shadow(2px 3px 2px rgba(0,0,0,.45))' }} fill="#f00" stroke="#c00000" strokeWidth=".5">
      <path d="M141.5 605.5L168 603L165.5 607.5L260 621.5Q262 623 259.5 624L165 611L166 615.5Z" />
      <path d="M27 702.5L53 709L50.5 712.5L141 755.5Q143 758 139.5 758.5L49 715.5L48 719.5Z" />
    </g>
    <path d="M126.5 608.5V624.5L130.3 621L132.8 626.8L135.5 625.6L133 620H138Z" fill="#fff" stroke="#223" />
  </svg>
);

const App = () => {
  return (
    <div className="relative flex h-screen flex-col overflow-hidden bg-[#f3f3f3] font-['Open_Sans','Noto_Sans_CJK_SC',sans-serif] text-[12px] leading-4 text-black">
      <TitleBar />
      <MenuBar />
      <StandardBar />
      <PropertyBar />
      <main className="flex min-h-0 flex-1">
        <Toolbox />
        <section className="flex min-w-0 flex-1 flex-col">
          <DocumentTabs />
          <div className="flex min-h-0 flex-1">
            {/* Ruler column */}
            <div className="flex w-[18px] shrink-0 flex-col border-r border-[#d2d2d2]">
              <svg width="17" height="18" viewBox="0 0 17 18" fill="none" stroke="#777" className="shrink-0" aria-hidden="true">
                <path d="M4 6.5H15M7.5 4V15" strokeDasharray="2 1" />
                <path d="M8 7L14 14M8 10V7H11" />
              </svg>
              <SideRuler />
            </div>
            <div className="flex min-w-0 flex-1 flex-col">
              <TopRuler />
              <div className="flex min-h-0 flex-1">
                <Canvas />
                <VerticalScroll />
              </div>
              <PageNavigator />
            </div>
          </div>
          <DocumentPalette />
        </section>
        <ColorPalette />
      </main>
      <StatusBar />
      <ImeBadge />
      <SiteMark />
      <Pointers />
    </div>
  );
};

export default App;
